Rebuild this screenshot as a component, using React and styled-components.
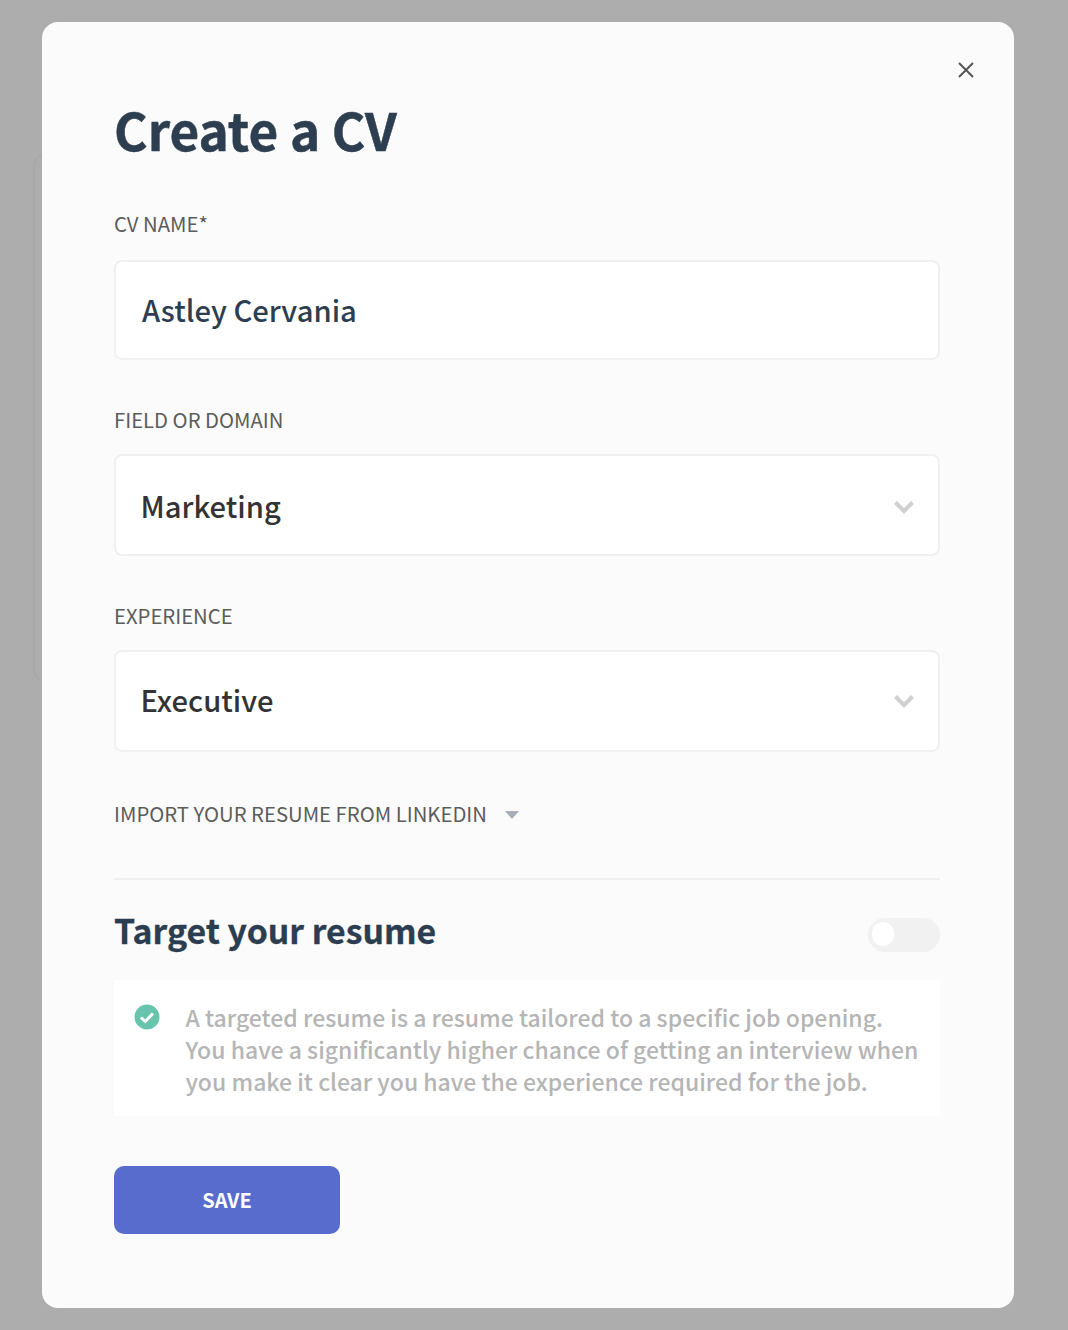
import React from "react";
import styled, { createGlobalStyle } from "styled-components";

const Global = createGlobalStyle`
  html, body { margin: 0; padding: 0; background: #adadad; }
  * { box-sizing: border-box; }
  body { font-family: "Noto Sans CJK SC", "Noto Sans", sans-serif; }
`;

const Page = styled.div`
  position: relative;
  width: 1068px;
  height: 1330px;
  padding: 22px 54px 22px 42px;
  overflow: hidden;
  background: #adadad;
`;

const BackCard = styled.div`
  position: absolute;
  left: 33px;
  top: 153px;
  width: 60px;
  height: 530px;
  border: 2px solid #a9a9a9;
  border-radius: 14px;
`;

const Modal = styled.div`
  position: relative;
  width: 972px;
  height: 1286px;
  padding: 74px 74px 0 72px;
  background: #fbfbfb;
  border-radius: 16px;
`;

const Close = styled.button`
  position: absolute;
  top: 37px;
  right: 37px;
  width: 22px;
  height: 22px;
  padding: 0;
  border: 0;
  background: none;
  display: flex;
`;

const Title = styled.h1`
  margin: 0;
  height: 66px;
  font-size: 51.3px;
  line-height: 66px;
  font-weight: 700;
  color: #2d3e50;
  -webkit-text-stroke: 0.5px #2d3e50;
`;

const Label = styled.div`
  margin-top: ${(p) => p.$top}px;
  height: 28px;
  font-size: 20.3px;
  line-height: 28px;
  font-weight: 400;
  color: #5c5c5c;
`;

const Field = styled.div`
  display: flex;
  align-items: center;
  justify-content: space-between;
  height: ${(p) => p.$h}px;
  margin-top: ${(p) => p.$top}px;
  padding: 0 23px ${(p) => p.$raise || 0}px ${(p) => p.$indent}px;
  background: #fff;
  border: 2px solid #f0f0f0;
  border-radius: 8px;
  font-size: 29.2px;
  font-weight: 500;
  line-height: 40px;
  color: ${(p) => p.$color};
`;

const ChevronIcon = styled.svg`
  flex: none;
  margin-top: 4px;
`;

const ImportRow = styled.div`
  display: flex;
  align-items: center;
  gap: 18px;
  margin-top: 47px;
  height: 28px;
  font-size: 20.3px;
  line-height: 28px;
  color: #5c5c5c;
`;

const Caret = styled.svg`
  flex: none;
  margin-top: 3px;
`;

const Divider = styled.hr`
  margin: 51px 0 0;
  height: 2px;
  border: 0;
  background: #f0f0f0;
`;

const TargetRow = styled.div`
  display: flex;
  align-items: center;
  justify-content: space-between;
  height: 100px;
`;

const SectionTitle = styled.h2`
  margin: 0;
  font-size: 33.8px;
  line-height: 48px;
  font-weight: 700;
  color: #2b3d50;
  -webkit-text-stroke: 0.3px #2b3d50;
`;

const Toggle = styled.div`
  width: 72px;
  height: 34px;
  margin-top: 10px;
  padding: 4px;
  border-radius: 17px;
  background: #f1f1f1;
`;

const Knob = styled.div`
  width: 22px;
  height: 24px;
  border-radius: 11px;
  background: #fff;
`;

const Info = styled.div`
  display: flex;
  height: 136px;
  padding: 21px 20px 0 20px;
  gap: 25.5px;
  background: #fff;
`;

const InfoIcon = styled.svg`
  flex: none;
  width: 26px;
  height: 26px;
  margin-top: 3px;
`;

const InfoText = styled.p`
  margin: 0;
  font-size: 23px;
  line-height: 32px;
  font-weight: 500;
  color: #b5b5b5;
  white-space: nowrap;
`;

const Save = styled.button`
  display: block;
  width: 226px;
  height: 68px;
  margin-top: 50px;
  border: 0;
  border-radius: 10px;
  background: #586cce;
  color: #fff;
  font-family: inherit;
  font-size: 20px;
  font-weight: 700;
  line-height: 28px;
`;

const Chevron = () => (
  <ChevronIcon width="22" height="14" viewBox="0 0 22 14">
    <path d="M2.5 2.5 11 11l8.5-8.5" fill="none" stroke="#d0d0d0" strokeWidth="4.2" />
  </ChevronIcon>
);

export default function App() {
  return (
    <>
      <Global />
      <Page>
        <BackCard />
        <Modal>
          <Close aria-label="Close">
            <svg width="22" height="22" viewBox="0 0 22 22">
              <path d="M4 4l14 14M18 4 4 18" stroke="#555" strokeWidth="2" fill="none" />
            </svg>
          </Close>
          <Title>Create a CV</Title>
          <Label $top={47}>CV NAME*</Label>
          <Field $h={100} $top={23} $raise={2} $indent={26} $color="#2d3e50">Astley Cervania</Field>
          <Label $top={45}>FIELD OR DOMAIN</Label>
          <Field $h={102} $top={21} $indent={24.5} $color="#333">
            Marketing
            <Chevron />
          </Field>
          <Label $top={45}>EXPERIENCE</Label>
          <Field $h={102} $top={21} $raise={4} $indent={24.5} $color="#333">
            Executive
            <Chevron />
          </Field>
          <ImportRow>
            IMPORT YOUR RESUME FROM LINKEDIN
            <Caret width="14" height="8" viewBox="0 0 14 8"><path d="M0 0h14L7 8z" fill="#a9adb6" /></Caret>
          </ImportRow>
          <Divider />
          <TargetRow>
            <SectionTitle>Target your resume</SectionTitle>
            <Toggle><Knob /></Toggle>
          </TargetRow>
          <Info>
            <InfoIcon viewBox="0 0 26 26">
              <circle cx="13" cy="13" r="12.5" fill="#68c4ad" />
              <path d="M7 13.5l4.2 4L19 9.5" fill="none" stroke="#fff" strokeWidth="3" />
            </InfoIcon>
            <InfoText>
              A targeted resume is a resume tailored to a specific job opening.<br />
              You have a significantly higher chance of getting an interview when<br />
              you make it clear you have the experience required for the job.
            </InfoText>
          </Info>
          <Save>SAVE</Save>
        </Modal>
      </Page>
    </>
  );
}
